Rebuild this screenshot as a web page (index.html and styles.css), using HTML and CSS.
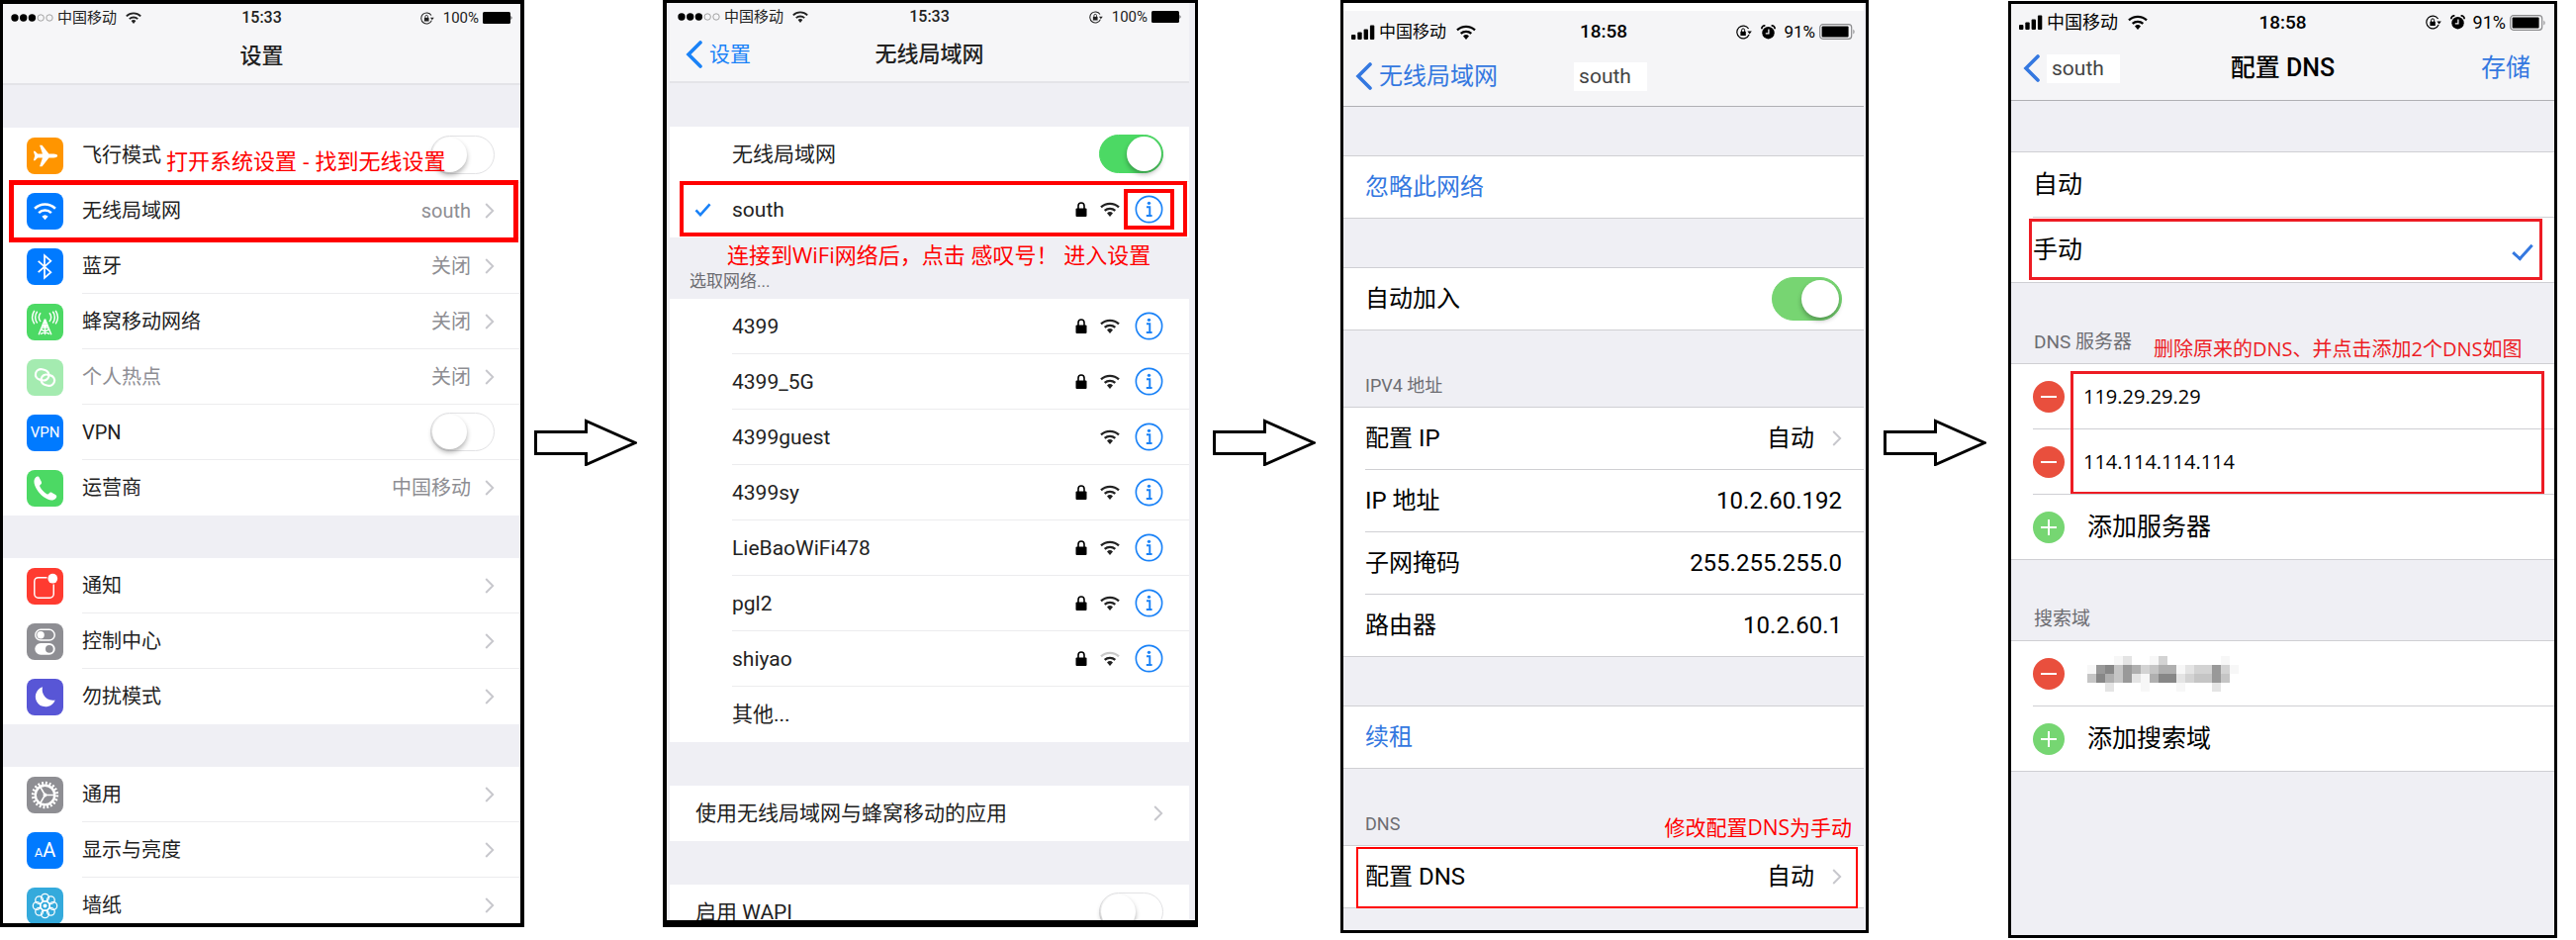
FILE: index.html
```html
<!DOCTYPE html>
<html lang="zh-CN">
<head>
    <meta charset="UTF-8">
    <title>DNS 设置</title>
    <link rel="stylesheet" href="styles.css">
</head>
<body>
<!--公用图标-->
<svg class="sprite" aria-hidden="true">
    <symbol id="wifi" viewBox="0 0 20 15">
        <path d="M10 15l-3-3.6a4.4 4.4 0 0 1 6 0z" fill="currentColor"/>
        <path d="M4.7 8.9a7.8 7.8 0 0 1 10.6 0M1 5.4a13 13 0 0 1 18 0" fill="none" stroke="currentColor" stroke-width="2.3"/>
    </symbol>
    <symbol id="wifi-weak" viewBox="0 0 20 15">
        <path d="M10 15l-3-3.6a4.4 4.4 0 0 1 6 0z" fill="currentColor"/>
        <path d="M4.7 8.9a7.8 7.8 0 0 1 10.6 0" fill="none" stroke="currentColor" stroke-width="2.3"/>
        <path d="M1 5.4a13 13 0 0 1 18 0" fill="none" stroke="#c9c9c9" stroke-width="2.3"/>
    </symbol>
    <symbol id="lock" viewBox="0 0 12 15">
        <rect x="0.5" y="6.5" width="11" height="8.5" rx="1" fill="currentColor"/>
        <path d="M3 7V4a3 3 0 0 1 6 0v3" fill="none" stroke="currentColor" stroke-width="1.6"/>
    </symbol>
    <symbol id="info" viewBox="0 0 30 30">
        <circle cx="15" cy="15" r="13.6" fill="none" stroke="currentColor" stroke-width="1.7"/>
        <circle cx="15" cy="8.6" r="1.7" fill="currentColor"/>
        <path d="M12.4 12.6h3.4v8.8M12.2 21.8h6" fill="none" stroke="currentColor" stroke-width="2"/>
    </symbol>
    <symbol id="more" viewBox="0 0 10 16">
        <path d="M1.2 1l7 7-7 7" fill="none" stroke="currentColor" stroke-width="1.9"/>
    </symbol>
    <symbol id="back" viewBox="0 0 17 28">
        <path d="M15 2L3 14l12 12" fill="none" stroke="currentColor" stroke-width="3.6" stroke-linecap="round"/>
    </symbol>
    <symbol id="tick" viewBox="0 0 18 15">
        <path d="M1.5 8l4.8 5L16.6 1.6" fill="none" stroke="currentColor" stroke-width="2.8"/>
    </symbol>
    <symbol id="rotate" viewBox="0 0 16 15">
        <path d="M12.6 4a6.4 6.4 0 1 0 .5 6" fill="none" stroke="currentColor" stroke-width="1.2"/>
        <path d="M11.4 6.6h4.4l-2.2 3z" fill="currentColor"/>
        <rect x="4.4" y="6.8" width="5.4" height="4.2" fill="currentColor"/>
        <path d="M5.6 7V5.4a1.5 1.5 0 0 1 3 0V7" fill="none" stroke="currentColor"/>
    </symbol>
    <symbol id="alarm" viewBox="0 0 15 15">
        <circle cx="7.5" cy="8.2" r="6.2" fill="currentColor"/>
        <path d="M7.9 4.6v4.2H4.8" fill="none" stroke="#f5f5f7" stroke-width="1.3"/>
        <path d="M.9 4.2A3 3 0 0 1 4.4 1M14.1 4.2A3 3 0 0 0 10.6 1" fill="none" stroke="currentColor" stroke-width="1.7"/>
    </symbol>
    <symbol id="bars" viewBox="0 0 24 15">
        <rect x="0" y="10" width="4.4" height="5" rx="1"/>
        <rect x="6.3" y="7.6" width="4.4" height="7.4" rx="1"/>
        <rect x="12.6" y="4.4" width="4.4" height="10.6" rx="1"/>
        <rect x="18.9" y="0.6" width="4.4" height="14.4" rx="1"/>
    </symbol>
    <symbol id="dots" viewBox="0 0 43 8">
        <circle cx="4" cy="4" r="3.7"/>
        <circle cx="12.7" cy="4" r="3.7"/>
        <circle cx="21.4" cy="4" r="3.7"/>
        <circle cx="30.2" cy="4" r="3.2" fill="none" stroke="#999" stroke-width="0.9"/>
        <circle cx="39" cy="4" r="3.2" fill="none" stroke="#999" stroke-width="0.9"/>
    </symbol>
    <symbol id="battery-full" viewBox="0 0 30 12">
        <rect x="0" y="0" width="28" height="12" rx="1.5"/>
        <path d="M28.6 4q1.6 2 0 4z"/>
    </symbol>
    <symbol id="battery" viewBox="0 0 37 16">
        <rect x="0.7" y="0.7" width="32" height="14.6" rx="3" fill="none" stroke="#8b8b8d" stroke-width="1.2"/>
        <rect x="2.6" y="2.6" width="27" height="10.8" rx="1"/>
        <path d="M34.4 5.4q2.4 2.6 0 5.2z" fill="#8b8b8d"/>
    </symbol>
    <symbol id="arrow" viewBox="0 0 104 48">
        <path d="M1.5 13.5h51v-11l49.5 22-49.5 22v-11h-51z" fill="#fff" stroke="#000" stroke-width="3"/>
    </symbol>
</svg>

<div class="steps">
    <!--第一步 设置-->
    <section class="phone phone-1">
        <header class="top">
            <div class="status">
                <div class="left"><svg class="dots"><use href="#dots"/></svg><span>中国移动</span><svg class="wifi"><use href="#wifi"/></svg></div>
                <b class="time">15:33</b>
                <div class="right"><svg class="rotate"><use href="#rotate"/></svg><span>100%</span><svg class="battery-full"><use href="#battery-full"/></svg></div>
            </div>
            <div class="nav"><h1>设置</h1></div>
        </header>
        <div class="group">
            <label class="row">
                <span class="app orange"><svg viewBox="0 0 38 38"><path d="M32 19c0-1.3-2-2-4-2h-5L16 8h-2.6l3 9h-5L8.6 14H7l1.4 5L7 24h1.6l2.800-3h5l-3 9H16l7-9h5c2 0 4-.7 4-2z" fill="#fff"/></svg></span>
                <span class="body"><span>飞行模式</span><input type="checkbox" class="switch"></span>
            </label>
            <a href="#" class="row">
                <span class="app blue"><svg viewBox="0 0 38 38"><path d="M19 28l-3.2-3.600a4.6 4.6 0 0 1 6.4 0z" fill="#fff"/><path d="M12.5 20.6a9.4 9.4 0 0 1 13 0M8.3 16.2a15.4 15.4 0 0 1 21.4 0" fill="none" stroke="#fff" stroke-width="2.6"/></svg></span>
                <span class="body"><span>无线局域网</span><span class="value">south</span><svg class="more"><use href="#more"/></svg></span>
                <span class="mark mark-row"></span>
                <span class="note">打开系统设置 - 找到无线设置</span>
            </a>
            <a href="#" class="row">
                <span class="app blue"><svg viewBox="0 0 38 38"><path d="M12 13.2l13 11.6-6.5 5.8V7.4l6.5 5.8-13 11.6" fill="none" stroke="#fff" stroke-width="1.8"/></svg></span>
                <span class="body"><span>蓝牙</span><span class="value">关闭</span><svg class="more"><use href="#more"/></svg></span>
            </a>
            <a href="#" class="row">
                <span class="app green"><svg viewBox="0 0 38 38"><g fill="none" stroke="#fff" stroke-width="1.5"><path d="M19 16l-6.500 16M19 16l6.500 16M15 26.500l8.500 5M23 26.500l-8.500 5M17 21.500l4.500 4M21 21.500l-4.500 4M19 16v16"/><path d="M14.5 9.500a6.400 6.400 0 0 0 0 9M23.5 9.500a6.400 6.400 0 0 1 0 9M11 8a9.600 9.600 0 0 0 0 12M27 8a9.600 9.600 0 0 1 0 12"/><path d="M8 7a13 13 0 0 0 0 14M30 7a13 13 0 0 1 0 14"/></g></svg></span>
                <span class="body"><span>蜂窝移动网络</span><span class="value">关闭</span><svg class="more"><use href="#more"/></svg></span>
            </a>
            <a href="#" class="row off">
                <span class="app green"><svg viewBox="0 0 38 38"><g fill="none" stroke="#fff" stroke-width="2.2" transform="rotate(14 19 19)"><rect x="8.5" y="11.5" width="14" height="11" rx="5.5"/><rect x="15.5" y="15.5" width="14" height="11" rx="5.5"/></g></svg></span>
                <span class="body"><span>个人热点</span><span class="value">关闭</span><svg class="more"><use href="#more"/></svg></span>
            </a>
            <label class="row">
                <span class="app blue vpn">VPN</span>
                <span class="body"><span>VPN</span><input type="checkbox" class="switch"></span>
            </label>
            <a href="#" class="row">
                <span class="app green"><svg viewBox="0 0 38 38"><path d="M9.5 7.5c1.500-1.300 3-.8 3.700.6l2 3.900c.6 1.300.2 2.300-.9 3.200-.9.7-1 1.300-.5 2.300 1.700 3.200 4 5.600 7 7.300 1 .6 1.700.4 2.300-.5.900-1.200 2-1.500 3.200-.8l3.600 2.200c1.400.9 1.600 2.300.4 3.500-2.300 2.500-5.200 2.600-8.600 1-6.400-3-10.600-7.700-13.200-14-1.300-3.400-1.300-6.500 1-8.700z" fill="#fff"/></svg></span>
                <span class="body"><span>运营商</span><span class="value">中国移动</span><svg class="more"><use href="#more"/></svg></span>
            </a>
        </div>
        <div class="group">
            <a href="#" class="row">
                <span class="app red"><svg viewBox="0 0 38 38"><path d="M21 10h-9a4 4 0 0 0-4 4v13a4 4 0 0 0 4 4h12a4 4 0 0 0 4-4V17" fill="none" stroke="#fff" stroke-width="1.5"/><circle cx="27" cy="11" r="5" fill="#fff"/></svg></span>
                <span class="body"><span>通知</span><svg class="more"><use href="#more"/></svg></span>
            </a>
            <a href="#" class="row">
                <span class="app gray"><svg viewBox="0 0 38 38"><rect x="9" y="6.5" width="20" height="11" rx="5.5" fill="none" stroke="#fff" stroke-width="1.5"/><circle cx="14.5" cy="12" r="3.8" fill="#fff"/><rect x="8.5" y="20.5" width="21" height="12" rx="6" fill="#fff"/><circle cx="23.5" cy="26.5" r="4" fill="#8e8e93"/></svg></span>
                <span class="body"><span>控制中心</span><svg class="more"><use href="#more"/></svg></span>
            </a>
            <a href="#" class="row">
                <span class="app purple"><svg viewBox="0 0 38 38"><path d="M16.5 8.5a11 11 0 0 0 13 13.5 10.5 10.5 0 1 1-13-13.5z" fill="#fff"/></svg></span>
                <span class="body"><span>勿扰模式</span><svg class="more"><use href="#more"/></svg></span>
            </a>
        </div>
        <div class="group">
            <a href="#" class="row">
                <span class="app gray"><svg viewBox="0 0 38 38"><circle cx="19" cy="19" r="12.5" fill="none" stroke="#fff" stroke-width="3" stroke-dasharray="2 1.927"/><circle cx="19" cy="19" r="10" fill="none" stroke="#fff" stroke-width="2.4"/><path d="M19 19h10M19 19l-5-8.7M19 19l-5 8.7" stroke="#fff" stroke-width="1.6"/><circle cx="19" cy="19" r="2" fill="#fff"/></svg></span>
                <span class="body"><span>通用</span><svg class="more"><use href="#more"/></svg></span>
            </a>
            <a href="#" class="row">
                <span class="app blue letters"><small>A</small>A</span>
                <span class="body"><span>显示与亮度</span><svg class="more"><use href="#more"/></svg></span>
            </a>
            <a href="#" class="row">
                <span class="app cyan"><svg viewBox="0 0 38 38"><g fill="none" stroke="#fff" stroke-width="1.3"><circle cx="19" cy="10.5" r="4"/><circle cx="25" cy="13" r="4"/><circle cx="27.5" cy="19" r="4"/><circle cx="25" cy="25" r="4"/><circle cx="19" cy="27.5" r="4"/><circle cx="13" cy="25" r="4"/><circle cx="10.5" cy="19" r="4"/><circle cx="13" cy="13" r="4"/><circle cx="19" cy="19" r="5"/></g><circle cx="19" cy="19" r="2" fill="#fff"/></svg></span>
                <span class="body"><span>墙纸</span><svg class="more"><use href="#more"/></svg></span>
            </a>
        </div>
    </section>

    <svg class="arrow arrow-first" aria-hidden="true"><use href="#arrow"/></svg>

    <!--第二步 无线局域网-->
    <section class="phone phone-2">
        <header class="top">
            <div class="status">
                <div class="left"><svg class="dots"><use href="#dots"/></svg><span>中国移动</span><svg class="wifi"><use href="#wifi"/></svg></div>
                <b class="time">15:33</b>
                <div class="right"><svg class="rotate"><use href="#rotate"/></svg><span>100%</span><svg class="battery-full"><use href="#battery-full"/></svg></div>
            </div>
            <div class="nav">
                <button class="back"><svg><use href="#back"/></svg>设置</button>
                <h1>无线局域网</h1>
            </div>
        </header>
        <div class="group">
            <label class="row">
                <span class="body"><span>无线局域网</span><input type="checkbox" class="switch" checked></span>
            </label>
            <div class="row">
                <svg class="tick"><use href="#tick"/></svg>
                <span class="body"><span>south</span><svg class="lock"><use href="#lock"/></svg><svg class="signal"><use href="#wifi"/></svg><button class="info" aria-label="south 详情"><svg><use href="#info"/></svg><span class="mark mark-info"></span></button></span>
                <span class="mark mark-row"></span>
                <span class="note">连接到WiFi网络后，点击 感叹号！ 进入设置</span>
            </div>
        </div>
        <h2>选取网络...</h2>
        <div class="group">
            <div class="row"><span class="body"><span>4399</span><svg class="lock"><use href="#lock"/></svg><svg class="signal"><use href="#wifi"/></svg><button class="info" aria-label="4399 详情"><svg><use href="#info"/></svg></button></span></div>
            <div class="row"><span class="body"><span>4399_5G</span><svg class="lock"><use href="#lock"/></svg><svg class="signal"><use href="#wifi"/></svg><button class="info" aria-label="4399_5G 详情"><svg><use href="#info"/></svg></button></span></div>
            <div class="row"><span class="body"><span>4399guest</span><svg class="signal"><use href="#wifi"/></svg><button class="info" aria-label="4399guest 详情"><svg><use href="#info"/></svg></button></span></div>
            <div class="row"><span class="body"><span>4399sy</span><svg class="lock"><use href="#lock"/></svg><svg class="signal"><use href="#wifi"/></svg><button class="info" aria-label="4399sy 详情"><svg><use href="#info"/></svg></button></span></div>
            <div class="row"><span class="body"><span>LieBaoWiFi478</span><svg class="lock"><use href="#lock"/></svg><svg class="signal"><use href="#wifi"/></svg><button class="info" aria-label="LieBaoWiFi478 详情"><svg><use href="#info"/></svg></button></span></div>
            <div class="row"><span class="body"><span>pgl2</span><svg class="lock"><use href="#lock"/></svg><svg class="signal"><use href="#wifi"/></svg><button class="info" aria-label="pgl2 详情"><svg><use href="#info"/></svg></button></span></div>
            <div class="row"><span class="body"><span>shiyao</span><svg class="lock"><use href="#lock"/></svg><svg class="signal"><use href="#wifi-weak"/></svg><button class="info" aria-label="shiyao 详情"><svg><use href="#info"/></svg></button></span></div>
            <a href="#" class="row"><span class="body"><span>其他...</span></span></a>
        </div>
        <div class="group wide">
            <a href="#" class="row"><span class="body"><span>使用无线局域网与蜂窝移动的应用</span><svg class="more"><use href="#more"/></svg></span></a>
        </div>
        <div class="group wide">
            <label class="row"><span class="body"><span>启用 WAPI</span><input type="checkbox" class="switch"></span></label>
        </div>
    </section>

    <svg class="arrow" aria-hidden="true"><use href="#arrow"/></svg>

    <!--第三步 网络详情-->
    <section class="phone phone-3">
        <header class="top">
            <div class="status">
                <div class="left"><svg class="bars"><use href="#bars"/></svg><span>中国移动</span><svg class="wifi"><use href="#wifi"/></svg></div>
                <b class="time">18:58</b>
                <div class="right"><svg class="rotate"><use href="#rotate"/></svg><svg class="alarm"><use href="#alarm"/></svg><span>91%</span><svg class="battery"><use href="#battery"/></svg></div>
            </div>
            <div class="nav">
                <button class="back"><svg><use href="#back"/></svg>无线局域网</button>
                <h1 class="patch">south</h1>
            </div>
        </header>
        <div class="group">
            <button class="row link"><span class="body"><span>忽略此网络</span></span></button>
        </div>
        <div class="group">
            <label class="row"><span class="body"><span>自动加入</span><input type="checkbox" class="switch" checked></span></label>
        </div>
        <h2>IPV4 地址</h2>
        <div class="group">
            <a href="#" class="row"><span class="body"><span>配置 IP</span><span class="value">自动</span><svg class="more"><use href="#more"/></svg></span></a>
            <div class="row"><span class="body"><span>IP 地址</span><span class="value">10.2.60.192</span></span></div>
            <div class="row"><span class="body"><span>子网掩码</span><span class="value">255.255.255.0</span></span></div>
            <div class="row"><span class="body"><span>路由器</span><span class="value">10.2.60.1</span></span></div>
        </div>
        <div class="group">
            <button class="row link"><span class="body"><span>续租</span></span></button>
        </div>
        <h2>DNS</h2>
        <div class="group">
            <a href="#" class="row">
                <span class="body"><span>配置 DNS</span><span class="value">自动</span><svg class="more"><use href="#more"/></svg></span>
                <span class="mark mark-row"></span>
                <span class="note">修改配置DNS为手动</span>
            </a>
        </div>
    </section>

    <svg class="arrow" aria-hidden="true"><use href="#arrow"/></svg>

    <!--第四步 配置 DNS-->
    <section class="phone phone-4">
        <header class="top">
            <div class="status">
                <div class="left"><svg class="bars"><use href="#bars"/></svg><span>中国移动</span><svg class="wifi"><use href="#wifi"/></svg></div>
                <b class="time">18:58</b>
                <div class="right"><svg class="rotate"><use href="#rotate"/></svg><svg class="alarm"><use href="#alarm"/></svg><span>91%</span><svg class="battery"><use href="#battery"/></svg></div>
            </div>
            <div class="nav">
                <button class="back"><svg><use href="#back"/></svg><span class="patch">south</span></button>
                <h1>配置 DNS</h1>
                <button class="save">存储</button>
            </div>
        </header>
        <div class="group">
            <label class="row"><span class="body"><span>自动</span><input type="radio" name="dns" class="choice"></span></label>
            <label class="row">
                <span class="body"><span>手动</span><input type="radio" name="dns" class="choice" checked></span>
                <span class="mark mark-row"></span>
            </label>
        </div>
        <h2>DNS 服务器</h2>
        <div class="group">
            <div class="row">
                <span class="body"><button class="round minus" aria-label="删除"></button><input type="text" class="server" aria-label="DNS 1" value="119.29.29.29"></span>
                <span class="mark mark-servers"></span>
                <span class="note">删除原来的DNS、并点击添加2个DNS如图</span>
            </div>
            <div class="row">
                <span class="body"><button class="round minus" aria-label="删除"></button><input type="text" class="server" aria-label="DNS 2" value="114.114.114.114"></span>
            </div>
            <div class="row">
                <span class="body"><button class="round plus" aria-label="添加"></button><span>添加服务器</span></span>
            </div>
        </div>
        <h2>搜索域</h2>
        <div class="group">
            <div class="row">
                <span class="body"><button class="round minus" aria-label="删除"></button>
                    <svg class="mosaic" viewBox="0 0 17 4" shape-rendering="crispEdges" aria-hidden="true">
                        <path fill="#f7f7f7" d="M3 0h1v1h-1zM7 0h1v1h-1zM15 0h1v1h-1zM0 1h1v1h-1zM10 1h1v1h-1zM16 1h1v1h-1zM6 2h1v1h-1zM6 3h1v1h-1zM10 3h1v1h-1z"/>
                        <path fill="#e4e4e4" d="M4 0h1v1h-1zM11 1h1v1h-1zM5 2h1v1h-1zM10 2h1v1h-1zM2 3h1v1h-1zM14 3h1v1h-1z"/>
                        <path fill="#d3d3d3" d="M8 0h1v1h-1zM6 1h1v1h-1zM12 1h2v1h-2zM15 1h1v1h-1zM11 2h1v1h-1z"/>
                        <path fill="#c5c5c5" d="M3 1h1v1h-1zM7 1h1v1h-1zM0 2h1v1h-1zM3 2h1v1h-1zM12 2h2v1h-2zM15 2h1v1h-1z"/>
                        <path fill="#afafaf" d="M5 1h1v1h-1zM8 1h2v1h-2zM2 2h1v1h-1zM7 2h1v1h-1z"/>
                        <path fill="#999" d="M1 1h1v1h-1zM4 1h1v2h-1zM14 1h1v2h-1z"/>
                        <path fill="#878787" d="M2 1h1v1h-1zM1 2h1v1h-1zM8 2h2v1h-2z"/>
                    </svg>
                </span>
            </div>
            <div class="row">
                <span class="body"><button class="round plus" aria-label="添加"></button><span>添加搜索域</span></span>
            </div>
        </div>
    </section>
</div>
</body>
</html>
```

FILE: styles.css
```css
* {
    margin: 0;
    padding: 0;
    box-sizing: border-box;
}

body {
    background: #fff;
    color: #000;
    font-family: Roboto, "Noto Sans CJK SC", sans-serif;
}

a {
    color: inherit;
    text-decoration: none;
}

button {
    border: 0;
    background: none;
    color: inherit;
    font: inherit;
    text-align: left;
    cursor: pointer;
}

svg {
    display: block;
    flex: none;
}

.sprite {
    display: none;
}

.steps {
    display: grid;
    grid-template-columns: 530fr 140px 541fr 144px 534fr 141px 555fr;
    grid-template-rows: minmax(0, 1fr);
    height: 100vh;
    padding-right: 19px;
}

.arrow {
    width: 104px;
    height: 48px;
    margin: 423px 0 0 15px;
}

.arrow-first {
    margin-left: 10px;
}

/* 手机外框 */
.phone {
    --row: 56px;
    --gap: 44px;
    --side: 26px;
    --text: 21px;
    --line: #ececee;
    --edge: 0px;
    --blue: #1a82f7;
    --note: #f00;
    overflow: hidden;
    border: 3px solid #000;
    background: #efeff4;
    font-size: var(--text);
    line-height: 28px;
}

.phone-1 {
    --gap: 43px;
    --text: 20px;
    margin-bottom: 13px;
    border-width: 4px 4px 4px 3px;
    color: #222;
}

.phone-2 {
    margin-bottom: 13px;
    padding: 0 6px 0 3px;
    border-width: 3px 3px 7px 4px;
    color: #222;
}

.phone-3 {
    --row: 63px;
    --gap: 49px;
    --side: 22px;
    --text: 24px;
    --line: #cfcfd3;
    --edge: 1px;
    --blue: #3478e0;
    margin-bottom: 7px;
    padding-right: 2px;
}

.phone-4 {
    --row: 66px;
    --gap: 51px;
    --side: 24px;
    --text: 25px;
    --line: #cfcfd3;
    --edge: 1px;
    --blue: #3478e0;
    --note: #ed1c24;
    margin: 1px 0 2px;
}

/* 状态栏和导航 */
.top {
    background: #f6f6f8;
    border-bottom: 2px solid #e4e4e8;
}

.phone-3 .top,
.phone-4 .top {
    border-bottom: 1px solid #b0b0b4;
    background: #f5f5f7;
}

.phone-3 .top {
    border-top: 8px solid #fff;
    padding-bottom: 6px;
}

.phone-4 .top {
    padding-bottom: 4px;
}

.status,
.nav {
    display: grid;
    grid-template-columns: 1fr auto 1fr;
    align-items: center;
}

.status {
    height: 26px;
    padding: 0 8px;
    font-size: 15px;
}

.phone-2 .status {
    height: 24px;
}

.phone-3 .status {
    height: 42px;
    font-size: 17px;
}

.phone-4 .status {
    height: 37px;
    font-size: 18px;
}

.status .left,
.status .right {
    display: flex;
    align-items: center;
    gap: 4px;
}

.status .right {
    justify-content: flex-end;
}

.time {
    font-size: 16px;
    font-weight: 500;
}

.phone-3 .time,
.phone-4 .time {
    font-size: 19px;
}

.dots {
    width: 43px;
    height: 8px;
}

.bars {
    width: 24px;
    height: 15px;
}

.wifi {
    width: 16px;
    height: 12px;
    margin-left: 5px;
}

.phone-3 .wifi,
.phone-4 .wifi {
    width: 20px;
    height: 15px;
    margin-left: 6px;
}

.rotate {
    width: 16px;
    height: 15px;
    margin-right: 5px;
}

.phone-1 .rotate,
.phone-2 .rotate {
    width: 14px;
    height: 13px;
}

.alarm {
    width: 15px;
    height: 15px;
    margin-right: 4px;
}

.battery-full {
    width: 30px;
    height: 12px;
}

.battery {
    width: 37px;
    height: 16px;
}

.nav {
    height: 54px;
}

.phone-2 .nav {
    height: 55px;
}

.phone-3 .nav {
    height: 48px;
}

.phone-4 .nav {
    height: 56px;
}

.nav h1 {
    grid-column: 2;
    font-size: 22px;
    font-weight: 500;
}

.phone-4 .nav h1 {
    font-size: 25px;
}

.back {
    display: flex;
    align-items: center;
    gap: 7px;
    padding-left: 12px;
    color: var(--blue);
}

.phone-2 .back {
    padding-left: 16px;
}

.back svg {
    width: 17px;
    height: 28px;
}

.save {
    padding-right: 24px;
    color: var(--blue);
    justify-self: end;
}

.nav .patch {
    padding: 0 16px 0 5px;
    background: #fff;
    color: #444;
    font-size: 21px;
    font-weight: 400;
    line-height: 29px;
}

.phone-3 .patch {
    margin-left: 14px;
}

/* 列表 */
.group {
    margin-top: var(--gap);
    border-top: var(--edge) solid var(--line);
    background: #fff;
}

h2 + .group {
    margin-top: 0;
}

h2 {
    display: flex;
    align-items: flex-end;
    height: 62px;
    padding: 0 20px 5px;
    color: #6d6d72;
    font-size: 17px;
    font-weight: 400;
    line-height: 26px;
}

.phone-3 h2 {
    height: 77px;
    padding: 0 22px 8px;
    font-size: 18px;
}

.phone-4 h2 {
    height: 81px;
    padding: 0 23px 8px;
    font-size: 19px;
}

.row {
    position: relative;
    display: flex;
    width: 100%;
    height: var(--row);
    padding-left: 22px;
    align-items: center;
}

.phone-1 .row {
    padding-left: 24px;
    gap: 19px;
}

.phone-2 .row {
    padding-left: 63px;
}

.phone-2 .wide .row {
    padding-left: 26px;
}

.phone-4 .row {
    padding-left: 22px;
}

.body {
    display: flex;
    flex: 1;
    min-width: 0;
    height: 100%;
    padding-right: var(--side);
    align-items: center;
    border-bottom: 1px solid var(--line);
}

.body > span:first-child {
    flex: 1;
}

.row:last-child .body {
    border-bottom-color: transparent;
}

.phone-3 .row:last-child,
.phone-4 .row:last-child {
    border-bottom: 1px solid var(--line);
}

.row:last-child > .body {
    border-bottom-width: calc(1px - var(--edge));
}

.link {
    color: var(--blue);
}

.value {
    color: #8e8e93;
}

.phone-3 .value {
    color: #000;
}

.more {
    width: 10px;
    height: 16px;
    margin-left: 14px;
    color: #c7c7cc;
}

.phone-3 .more {
    margin-left: 18px;
}

.off {
    color: #8e8e93;
}

.off .app {
    opacity: 0.5;
}

/* 应用图标 */
.app {
    display: flex;
    flex: none;
    width: 37px;
    height: 37px;
    align-items: center;
    justify-content: center;
    border-radius: 8px;
    color: #fff;
}

.app svg {
    width: 37px;
    height: 37px;
}

.orange { background: #ff9500; }
.blue { background: #007aff; }
.green { background: #4cd964; }
.red { background: #ff3b30; }
.gray { background: #8e8e93; }
.purple { background: #5856d6; }
.cyan { background: #34aadc; }

.vpn {
    font-size: 15px;
}

.letters {
    align-items: baseline;
    font-size: 20px;
    line-height: 37px;
}

.letters small {
    font-size: 13px;
}

/* 开关 */
.switch {
    appearance: none;
    display: flex;
    flex: none;
    width: 65px;
    height: 39px;
    padding: 1px;
    border: 1px solid #e2e2e4;
    border-radius: 22px;
    background: #fff;
}

.switch::after {
    content: "";
    width: 35px;
    height: 35px;
    border-radius: 50%;
    background: #fff;
    box-shadow: 0 3px 5px rgba(0, 0, 0, 0.3);
}

.switch:checked {
    justify-content: flex-end;
    border-color: #4cd964;
    background: #4cd964;
}

.phone-3 .switch {
    width: 71px;
    height: 44px;
    padding: 2px;
    border-color: #77d572;
    background: #77d572;
}

.phone-3 .switch::after {
    width: 38px;
    height: 38px;
}

/* 无线网络 */
.tick {
    position: absolute;
    left: 25px;
    width: 17px;
    height: 14px;
    color: var(--blue);
}

.lock {
    width: 12px;
    height: 15px;
    color: #000;
}

.signal {
    width: 20px;
    height: 15px;
    margin: 0 15px 0 13px;
}

.info {
    position: relative;
    color: var(--blue);
}

.info svg {
    width: 29px;
    height: 29px;
}

/* DNS */
.choice {
    appearance: none;
    width: 18px;
    height: 18px;
}

.choice:checked::after {
    content: "";
    display: block;
    width: 17px;
    height: 8px;
    margin-top: 3px;
    border: solid var(--blue);
    border-width: 0 0 3px 3px;
    transform: rotate(-48deg);
}

.round {
    flex: none;
    width: 32px;
    height: 32px;
    margin-right: 23px;
    border-radius: 50%;
    background: linear-gradient(#fff, #fff) center / 16px 2px no-repeat #e94f3d;
}

.plus {
    background: linear-gradient(#fff, #fff) center / 16px 2px no-repeat, linear-gradient(#fff, #fff) center / 2px 16px no-repeat #76d672;
}

.server {
    flex: 1;
    min-width: 0;
    margin-left: -4px;
    border: 0;
    background: none;
    font: 20px/30px "Open Sans", sans-serif;
}

.mosaic {
    width: 153px;
    height: 36px;
}

/* 红色标注 */
.mark {
    position: absolute;
    border: 4px solid var(--note);
    pointer-events: none;
}

.phone-1 .mark-row {
    inset: -3px 2px -4px 6px;
    border-width: 5px;
}

.phone-2 .mark-row {
    inset: -1px 2px 1px 10px;
}

.mark-info {
    inset: -6px -11px;
}

.phone-3 .mark-row {
    inset: 1px 6px -1px 13px;
    border-width: 2px;
}

.phone-4 .mark-row {
    inset: 1px 12px 2px 18px;
    border-width: 3px;
}

.mark-servers {
    inset: 7px 10px -66px 60px;
    border-width: 3px;
}

.note {
    position: absolute;
    color: var(--note);
    font: 22px/30px "Open Sans", "Noto Sans CJK SC", sans-serif;
    white-space: nowrap;
    pointer-events: none;
}

.phone-1 .note {
    left: 165px;
    bottom: 64px;
}

.phone-2 .note {
    left: 58px;
    top: 58px;
}

.phone-3 .note {
    right: 12px;
    bottom: 66px;
    font-size: 21px;
}

.phone-4 .note {
    left: 144px;
    bottom: 66px;
    font-size: 20px;
}
```
